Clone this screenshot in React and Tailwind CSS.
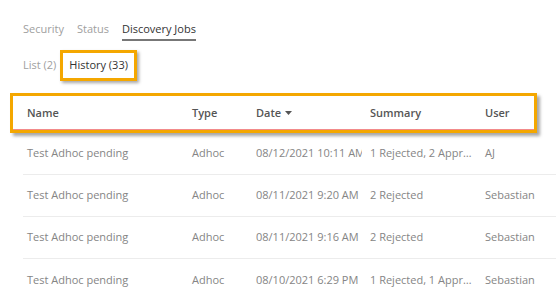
import React from "react";

const rows = [
  { name: "Test Adhoc pending", type: "Adhoc", date: "08/12/2021 10:11 AM", summary: "1 Rejected, 2 Approved", user: "AJ" },
  { name: "Test Adhoc pending", type: "Adhoc", date: "08/11/2021 9:20 AM", summary: "2 Rejected", user: "Sebastian" },
  { name: "Test Adhoc pending", type: "Adhoc", date: "08/11/2021 9:16 AM", summary: "2 Rejected", user: "Sebastian" },
  { name: "Test Adhoc pending", type: "Adhoc", date: "08/10/2021 6:29 PM", summary: "1 Rejected, 1 Approved", user: "Sebastian" },
];

const cols = "grid grid-cols-[165px_64px_114px_115px_1fr]";

const App = () => {
  return (
    <div className="w-[556px] h-[293px] overflow-hidden bg-white font-['Open_Sans',sans-serif] text-[11px]">
      <div className="flex gap-[13px] pl-[23px] pt-[21px]">
        <span className="text-[#a0a0a0] leading-[16px]">Security</span>
        <span className="text-[#a0a0a0] leading-[16px]">Status</span>
        <span className="text-[#333] leading-[16px] pb-[2px] border-b-2 border-[#777]">Discovery Jobs</span>
      </div>

      <div className="flex items-center pl-[23px] mt-[9px] h-[31px]">
        <span className="text-[#a0a0a0]">List (2)</span>
        <span className="ml-[4px] h-[31px] flex items-center px-[6px] border-[3px] border-[#f4a700] text-[#333] shadow-[2px_2px_3px_rgba(0,0,0,0.35)]">
          History (33)
        </span>
      </div>

      <div className="mt-[12px] pl-[23px]">
        <div className="relative">
          <div className={`${cols} h-[40px] items-center font-semibold text-[#555]`}>
            <div className="pl-[4px]">Name</div>
            <div className="pl-[4px]">Type</div>
            <div className="pl-[4px] flex items-center gap-[4px]">
              Date
              <svg width="7" height="4" viewBox="0 0 7 4">
                <path d="M0 0h7L3.5 4z" fill="#555" />
              </svg>
            </div>
            <div className="pl-[4px]">Summary</div>
            <div className="pl-[4px]">User</div>
          </div>
          <div className="absolute left-[-13px] top-0 w-[527px] h-[40px] border-[3px] border-[#f4a700] shadow-[3px_3px_3px_rgba(0,0,0,0.35)] pointer-events-none">
            <div className="absolute left-0 right-0 bottom-0 h-px bg-[#f28b8b]" />
          </div>
        </div>
        {rows.map((r, i) => (
          <div
            key={i}
            className={`${cols} h-[42px] items-center text-[#858585] ${i < rows.length - 1 ? "border-b border-[#ececec]" : ""}`}
          >
            <div className="pl-[4px] truncate">{r.name}</div>
            <div className="pl-[4px] truncate">{r.type}</div>
            <div className="pl-[4px]">
              <div className="w-[106px] overflow-hidden whitespace-nowrap">{r.date}</div>
            </div>
            <div className="pl-[4px] pr-[9px] truncate">{r.summary}</div>
            <div className="pl-[4px] truncate">{r.user}</div>
          </div>
        ))}
      </div>
    </div>
  );
};

export default App;
